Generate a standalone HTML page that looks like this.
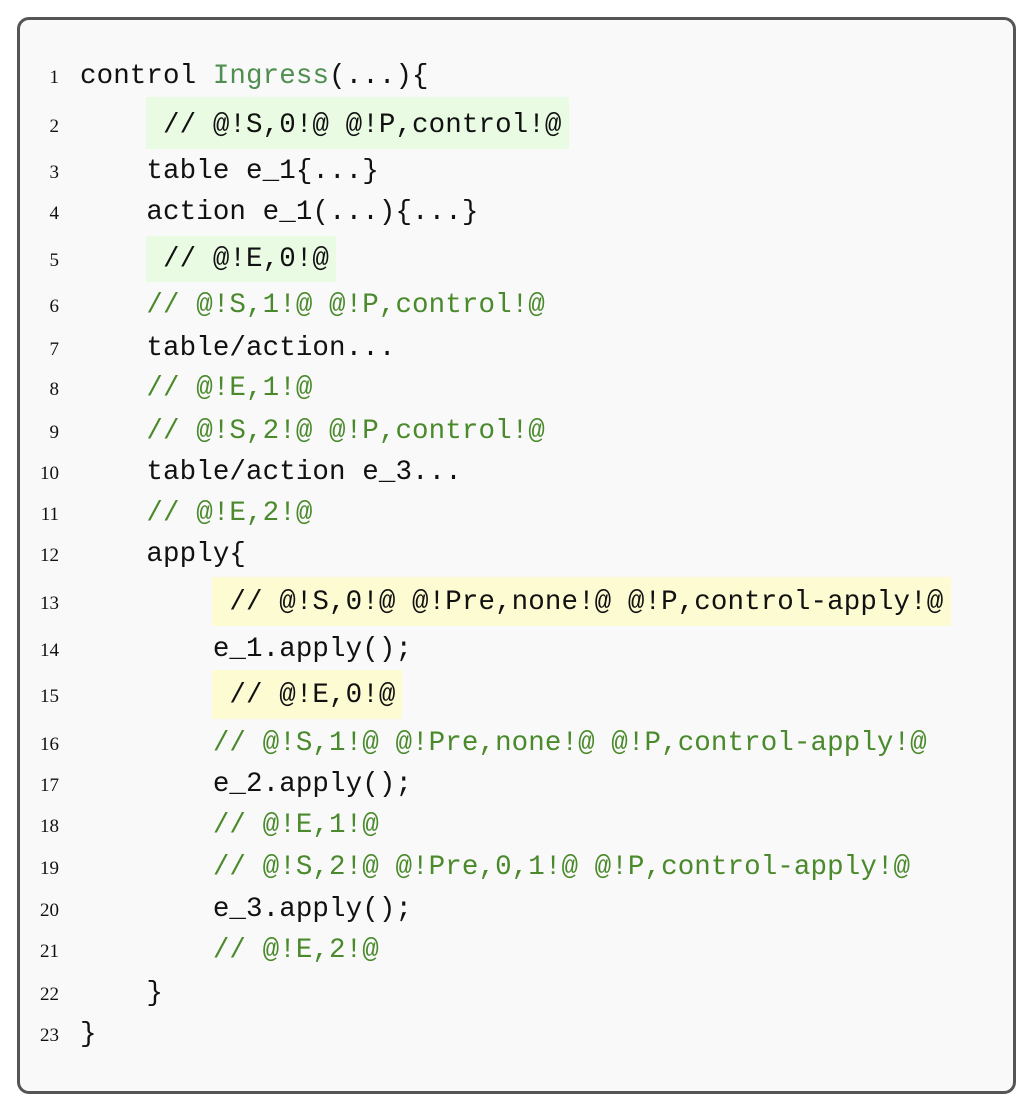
<!DOCTYPE html>
<html><head><style>
body{margin:0;width:1032px;height:1109px;background:#fff;position:relative;overflow:hidden}
.box{position:absolute;left:17px;top:17px;width:993px;height:1071px;border:3px solid #555;border-radius:12px;background:#f9f9f9}
.l{position:absolute;left:80px;height:28px;line-height:28px;font-family:"Liberation Mono",monospace;font-size:27.5px;color:#111;white-space:pre;letter-spacing:0.1px;margin-top:2px}
.n{position:absolute;width:24px;text-align:right;left:35px;font-family:"Liberation Serif",serif;font-size:19px;line-height:28px;color:#111;margin-top:2px}
.c{color:#4a8a2c}
.k{color:#4f8f4f}
.hg{position:absolute;background:#eafbe4}
.hy{position:absolute;background:#fdfbd2}
</style></head><body>
<div class="box"></div>
<div class="hg" style="left:146px;top:97px;width:423px;height:52px"></div>
<div class="hg" style="left:146px;top:236px;width:190px;height:46px"></div>
<div class="hy" style="left:212px;top:577px;width:739px;height:49px"></div>
<div class="hy" style="left:212px;top:670px;width:190px;height:49px"></div>

<div class="n" style="top:62px">1</div><div class="l" style="top:61px">control <span class="k">Ingress</span>(...){</div>
<div class="n" style="top:111px">2</div><div class="l" style="top:110px">     // @!S,0!@ @!P,control!@</div>
<div class="n" style="top:157px">3</div><div class="l" style="top:156px">    table e_1{...}</div>
<div class="n" style="top:198px">4</div><div class="l" style="top:197px">    action e_1(...){...}</div>
<div class="n" style="top:245px">5</div><div class="l" style="top:244px">     // @!E,0!@</div>
<div class="n" style="top:291px">6</div><div class="l c" style="top:290px">    // @!S,1!@ @!P,control!@</div>
<div class="n" style="top:334px">7</div><div class="l" style="top:333px">    table/action...</div>
<div class="n" style="top:374px">8</div><div class="l c" style="top:373px">    // @!E,1!@</div>
<div class="n" style="top:417px">9</div><div class="l c" style="top:416px">    // @!S,2!@ @!P,control!@</div>
<div class="n" style="top:458px">10</div><div class="l" style="top:457px">    table/action e_3...</div>
<div class="n" style="top:499px">11</div><div class="l c" style="top:498px">    // @!E,2!@</div>
<div class="n" style="top:540px">12</div><div class="l" style="top:539px">    apply{</div>
<div class="n" style="top:588px">13</div><div class="l" style="top:587px">         // @!S,0!@ @!Pre,none!@ @!P,control-apply!@</div>
<div class="n" style="top:635px">14</div><div class="l" style="top:634px">        e_1.apply();</div>
<div class="n" style="top:681px">15</div><div class="l" style="top:680px">         // @!E,0!@</div>
<div class="n" style="top:729px">16</div><div class="l c" style="top:728px">        // @!S,1!@ @!Pre,none!@ @!P,control-apply!@</div>
<div class="n" style="top:770px">17</div><div class="l" style="top:769px">        e_2.apply();</div>
<div class="n" style="top:811px">18</div><div class="l c" style="top:810px">        // @!E,1!@</div>
<div class="n" style="top:853px">19</div><div class="l c" style="top:852px">        // @!S,2!@ @!Pre,0,1!@ @!P,control-apply!@</div>
<div class="n" style="top:895px">20</div><div class="l" style="top:894px">        e_3.apply();</div>
<div class="n" style="top:936px">21</div><div class="l c" style="top:935px">        // @!E,2!@</div>
<div class="n" style="top:979px">22</div><div class="l" style="top:978px">    }</div>
<div class="n" style="top:1020px">23</div><div class="l" style="top:1019px">}</div>
</body></html>
